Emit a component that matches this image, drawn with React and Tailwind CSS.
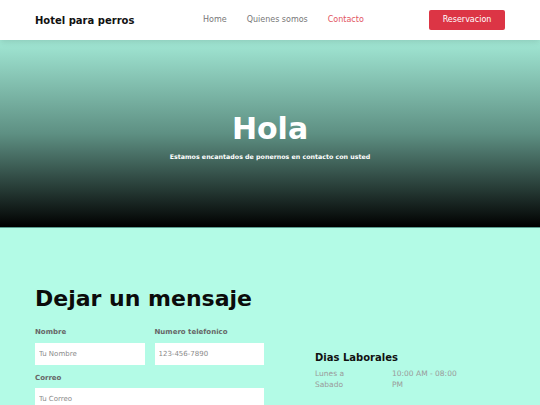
import React from 'react'

const font = { fontFamily: '"DejaVu Sans", "Noto Sans", sans-serif' }

const Field = ({ label, placeholder, className }) => (
  <div className={`flex flex-col ${className || ''}`}>
    <label className="text-[7px] font-semibold text-[#666] mb-[5px] whitespace-nowrap">{label}</label>
    <input
      className="h-[22px] bg-white px-[4px] text-[7px] text-[#777] placeholder-[#8a8a8a] outline-none"
      placeholder={placeholder}
    />
  </div>
)

const App = () => {
  return (
    <div className="w-[540px] h-[405px] overflow-hidden bg-[#b3fbe6]" style={font}>
      <nav className="relative z-10 h-[40px] bg-white shadow-[0_2px_6px_rgba(0,0,0,0.12)] px-[35px] flex items-center">
        <div className="text-[10px] font-bold text-[#111] w-[168px] whitespace-nowrap">Hotel para perros</div>
        <ul className="flex items-center gap-[20px] text-[8px] text-[#777]">
          <li>Home</li>
          <li>Quienes somos</li>
          <li className="text-[#e2545f]">Contacto</li>
        </ul>
        <button className="ml-auto h-[20px] w-[76px] rounded-[2px] bg-[#dc3545] text-white text-[8px]">
          Reservacion
        </button>
      </nav>

      <section className="h-[188px] bg-[linear-gradient(#a2e8d5,#5e9083_50%,#000)] flex flex-col items-center justify-center border-b border-[#5a9b8e]">
        <h1 className="text-[30px] font-bold text-white leading-none mt-[8px]">Hola</h1>
        <p className="text-[6.3px] font-bold text-white mt-[8px] whitespace-nowrap">
          Estamos encantados de ponernos en contacto con usted
        </p>
      </section>

      <section className="px-[35px] pt-[60px] flex">
        <div className="w-[229px]">
          <h2 className="text-[22px] font-bold text-[#0b0b0b] leading-none whitespace-nowrap">Dejar un mensaje</h2>
          <div className="flex gap-[10px] mt-[17px]">
            <Field label="Nombre" placeholder="Tu Nombre" className="flex-1" />
            <Field label="Numero telefonico" placeholder="123-456-7890" className="flex-1" />
          </div>
          <Field label="Correo" placeholder="Tu Correo" className="mt-[8px]" />
        </div>
        <div className="ml-[51px] pt-[62px]">
          <h3 className="text-[10px] font-semibold text-[#111] whitespace-nowrap">Dias Laborales</h3>
          <div className="flex text-[7.5px] text-[#9a9a9a] leading-[11px] mt-[3px]">
            <div className="w-[77px]">Lunes a<br />Sabado</div>
            <div className="w-[68px]">10:00 AM - 08:00 PM</div>
          </div>
        </div>
      </section>
    </div>
  )
}

export default App
